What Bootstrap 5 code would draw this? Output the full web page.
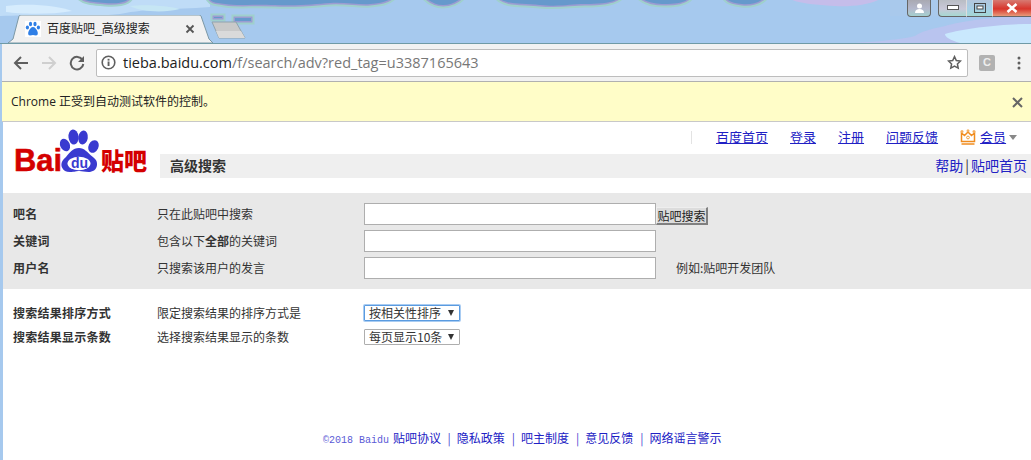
<!DOCTYPE html>
<html lang="zh-CN">
<head>
<meta charset="utf-8">
<title>百度贴吧_高级搜索</title>
<link href="https://cdn.jsdelivr.net/npm/bootstrap@5.3.0/dist/css/bootstrap.min.css" rel="stylesheet">
<style>
html,body{height:460px;overflow:hidden}
body{font-family:"Liberation Sans","Noto Sans CJK SC",sans-serif;font-size:12px;color:#333;background:#a6c9ee;line-height:1.2}
a{color:#2020c4}
.wb-title{height:44px;background:#a6c9ee;border-bottom:1px solid #6f9aa6;padding-left:8px}
.wb-sky{position:absolute;left:0;top:0;width:1031px;height:43px}
.wb-tab{width:205px;height:28px;padding:0 15px 0 17px}
.wb-shape{position:absolute;inset:0;width:100%;height:100%}
.wb-tabtext{font-size:12px;color:#222;margin-left:6px;width:138px;white-space:nowrap}
.wb-newtab{margin:0 0 4px -2px;position:relative}
.wb-ctrls{height:17px;align-self:flex-start;position:relative}
.wb-user{width:24px;height:17px;background:linear-gradient(#a9a9b2,#b4b8cc 55%,#a4d0cf);border:1px solid #666;border-top:0;border-radius:0 0 4px 4px;margin-right:7px}
.wb-min,.wb-max,.wb-close{height:17px;border-bottom:1px solid #666;border-right:1px solid #ddd}
.wb-min{width:29px;background:linear-gradient(#b9bdc4,#c9c8d8 55%,#a6d8d2);border-left:1px solid #666;border-radius:0 0 0 4px}
.wb-max{width:26px;background:linear-gradient(#b3c6dc,#a6cfe6 55%,#a4d8d4)}
.wb-close{width:38px;background:linear-gradient(#d77a72,#d8352c 55%,#e89a78);border-right:0}
.wb-bar{height:38px;background:#f2f2f2;border-bottom:1px solid #b0b0b0;margin-left:2px;padding-left:11px}
.wb-nav{margin-right:12px}
.wb-omni{width:872px;height:28px;background:#fff;border:1px solid #bdbdbd;border-radius:2px;margin-left:-1px;padding:0 5px 0 4px}
.wb-url{font-family:"Open Sans","Liberation Sans",sans-serif;font-size:14.500px;color:#222;margin-left:7px;white-space:nowrap}
.wb-url span{color:#777}
.wb-ext{width:16px;height:16px;background:#b2b2b2;color:#eee;font-weight:700;font-size:11px;border-radius:2px;margin-left:11px}
.wb-dots{margin-left:22px}
.wb-info{height:40px;background:#fffdc8;border-bottom:1px solid #c8c8c8;margin-left:2px;padding:2px 8px 0 9px;color:#222;font-family:"Open Sans","Noto Sans CJK SC",sans-serif;font-size:12px}
.pg{background:#fff;margin-left:3px;height:338px}
.pg-head{padding-bottom:15px}
.pg-logo{width:157px;flex:none;padding:7px 0 0 10px;height:56px}
.pg-logo svg{display:block}
.logo-bai{font-family:"Liberation Sans",sans-serif;font-weight:700;font-size:31px;fill:#d40000;stroke:#d40000;stroke-width:.5px}
.logo-tb{font-family:"Noto Sans CJK SC",sans-serif;font-weight:900;font-size:24px;fill:#d40000}
.logo-du{font-family:"Liberation Sans",sans-serif;font-weight:700;font-size:14px;fill:#3a3ad0}
.pg-top{height:32px;padding:0 0 2px 531px;font-size:13px;font-family:"Noto Sans CJK SC",sans-serif}
.pg-sep{width:1px;height:13px;background:#e3e3e3;margin-right:24px}
.pg-top a{margin-right:22px;white-space:nowrap}
.pg-top a.pg-vip{margin-right:3px;margin-left:4px}
.pg-caret{width:0;height:0;border:4px solid transparent;border-top:5px solid #888;border-bottom:0}
.pg-bar{height:24px;background:#efefef;padding:0 4px 2px 10px;font-family:"Noto Sans CJK SC",sans-serif}
.pg-bar b{font-size:14px;color:#333}
.pg-bar div{font-size:14px;color:#333}
.pg-bar a{text-decoration:none}
.pg-bar span{margin:0 2px}
.fm-gray{background:#e8e8e8;height:96px;padding:10px 0 0 10px}
.fm-plain{padding:16px 0 0 10px}
.fm-row{height:27px;font-family:"Noto Sans CJK SC",sans-serif;font-size:12px}
.fm-row2{height:24px;font-family:"Noto Sans CJK SC",sans-serif;font-size:12px}
.fm-label{width:144px;flex:none;font-weight:700;color:#333;letter-spacing:.25px}
.fm-desc{width:207px;flex:none;color:#333}
.fm-row2 .fm-label,.fm-row2 .fm-desc{padding-top:1px}
.fm-desc b{font-weight:700}
.fm-input{width:292px;height:22px;border:1px solid #aeaeae;background:#fff;flex:none;align-self:flex-start;padding:0 2px;outline:0}
.fm-btn{width:52px;height:18px;padding:0;border:1px solid;border-color:#eee #808080 #808080 #eee;border-width:1px 2px 2px 1px;background:#dcdcdc;font:12px/14px "Noto Sans CJK SC",sans-serif;color:#222;align-self:flex-start;margin-top:4px;white-space:nowrap}
.fm-hint{margin-left:20px;color:#333}
.fm-select{width:96px;height:16px;border:1px solid #aeaeae;background:#fff;padding:0 0 0 4px;font:12px/14px "Noto Sans CJK SC",sans-serif;color:#333;border-radius:1px;overflow:hidden}
.fm-select.on{border:1px solid #5a9be0;box-shadow:0 0 0 1px #a9ccf2}
.fm-tri{margin-left:auto;margin-right:5px;width:0;height:0;border:3.500px solid transparent;border-top:6px solid #333;border-bottom:0}
.pg-foot{margin-top:78px;padding-left:320px;font-family:"Noto Sans CJK SC",sans-serif;font-size:12px;white-space:nowrap}
.pg-foot a{text-decoration:none}
.pg-foot .cp{font-family:"Liberation Mono",monospace;font-size:10px;color:#5a5ad6;margin-right:4px}
.pg-foot i{font-style:normal;color:#4a4ad0;margin:0 6px 0 7px}
.pg-foot i:first-of-type{margin-left:6.500px}
</style>
</head>
<body>
<header>
  <div class="wb-title position-relative d-flex align-items-end">
    <svg class="wb-sky" viewBox="0 0 1031 43" aria-hidden="true">
      <defs>
        <path id="sky1" d="M208 -3H393C388 2 380 3 370 4S345 2 330 3 300 6 275 5 240 6 225 4 212 2 208 -3Z"/>
        <path id="sky2" d="M425 -3H462C458 2 450 5 443 5S430 2 425 -3Z"/>
        <path id="sky3" d="M498 -3H620C615 3 600 4 585 4S560 7 540 5 505 5 498 -3Z"/>
        <path id="sky4" d="M640 -3H690C686 3 675 4 665 4S645 2 640 -3Z"/>
        <path id="sky5" d="M725 -3H765C760 3 750 5 742 4S728 2 725 -3Z"/>
        <path id="sky6" d="M80 -3H130C128 3 115 4 105 3S85 2 80 -3Z"/>
        <path id="sky7" d="M214 17h8v1h-8zM235 18h16v3h-16z"/>
        <g id="skyall"><use href="#sky1"/><use href="#sky2"/><use href="#sky3"/><use href="#sky4"/><use href="#sky5"/><use href="#sky6"/><use href="#sky7"/></g>
      </defs>
      <path d="M0 0H210V7C170 10 150 8 120 14 80 18 30 14 0 16Z" fill="#bfdcf7"/>
      <path d="M6 6C30 3 60 6 72 11 50 15 20 14 6 12Z" fill="#d6ecfd"/>
      <path d="M130 6c15-2 40 0 50 3-15 4-40 3-50-3z" fill="#c6e6f4"/>
      <path d="M790 -1h90c-10 6-30 8-45 7s-35-2-45-7z" fill="#c5bdea"/>
      <path d="M890 0h141v16H890z" fill="#a9c9ec"/>
      <path d="M945 26c20-6 60-10 86-10v28H840c30-2 60-4 75-8 5-4 15-7 30-10z" fill="#c8bff0" opacity=".55"/>
      <path d="M945 34c20-6 60-10 86-10v19H960c-10-3-15-6-15-9z" fill="#c9e8fd"/>
      <use href="#skyall" fill="#9fd0cc" stroke="#9fd0cc" stroke-width="7"/>
      <use href="#skyall" fill="#9c9cd2" stroke="#9c9cd2" stroke-width="3"/>
      <use href="#skyall" fill="#6699cc"/>
    </svg>
    <div class="wb-tab position-relative d-flex align-items-center">
      <svg class="wb-shape" viewBox="0 0 205 28" aria-hidden="true"><path d="M0 28 L5 24 L11 1 Q11.500 0 13 0 L191 0 Q192.500 0 193 1 L201 24 L205 28Z" fill="#f1f1f1" stroke="#7c98a6"/></svg>
      <svg class="position-relative" width="16" height="16" viewBox="0 0 16 16" aria-hidden="true"><rect width="16" height="16" fill="#fff"/><g fill="#2f7fe6"><ellipse cx="5.500" cy="3" rx="1.600" ry="2.200"/><ellipse cx="10" cy="3" rx="1.600" ry="2.200"/><ellipse cx="2.400" cy="6.500" rx="1.600" ry="2"/><ellipse cx="13.400" cy="6.500" rx="1.600" ry="2"/><path d="M8 6c-2 0-3 2-4 3.500S2.500 14.500 5 14.500c1.200 0 2-.4 3-.4s1.800.4 3 .4c2.500 0 2-3.500 1-5S10 6 8 6z"/></g></svg>
      <span class="wb-tabtext position-relative">百度贴吧_高级搜索</span>
      <svg class="position-relative" width="10" height="10" viewBox="0 0 10 10" aria-hidden="true"><path d="M1.500 1.500l7 7M8.500 1.500l-7 7" stroke="#555" stroke-width="1.800"/></svg>
    </div>
    <svg class="wb-newtab" width="35" height="18" viewBox="0 0 35 18" aria-hidden="true"><path d="M1 1H25L34 17H8Z" fill="#c9c9c9" stroke="#8fa3ad"/><path d="M5 10H30L34 17H8Z" fill="#dadada"/></svg>
    <div class="wb-ctrls ms-auto d-flex">
      <div class="wb-user d-flex align-items-center justify-content-center"><svg width="11" height="11" viewBox="0 0 11 11" aria-hidden="true"><circle cx="5.500" cy="3" r="2.500" fill="#fff"/><path d="M1 10c0-3 2-4 4.500-4S10 7 10 10z" fill="#fff"/></svg></div>
      <div class="wb-min d-flex align-items-center justify-content-center"><svg width="12" height="6" viewBox="0 0 12 6" aria-hidden="true"><rect x=".5" y=".5" width="11" height="4" fill="#fff" stroke="#555"/></svg></div>
      <div class="wb-max d-flex align-items-center justify-content-center"><svg width="12" height="10" viewBox="0 0 12 10" aria-hidden="true"><rect x=".5" y=".5" width="11" height="9" fill="none" stroke="#444"/><rect x="3" y="3" width="6" height="3" fill="#fff" stroke="#444"/></svg></div>
      <div class="wb-close d-flex align-items-center justify-content-center"><svg width="12" height="10" viewBox="0 0 12 10" aria-hidden="true"><path d="M1.500 1l9 8M10.500 1l-9 8" stroke="#fff" stroke-width="2.600"/></svg></div>
    </div>
  </div>
  <div class="wb-bar d-flex align-items-center">
    <svg class="wb-nav" width="16" height="16" viewBox="0 0 16 16" aria-hidden="true"><path d="M15 8H2M8 2L2 8l6 6" fill="none" stroke="#5f5f5f" stroke-width="2"/></svg>
    <svg class="wb-nav" width="16" height="16" viewBox="0 0 16 16" aria-hidden="true"><path d="M1 8h13M8 2l6 6-6 6" fill="none" stroke="#cfcfcf" stroke-width="2"/></svg>
    <svg class="wb-nav" width="16" height="16" viewBox="0 0 16 16" aria-hidden="true"><path d="M13.500 5A6.300 6.300 0 1 0 14.300 9" fill="none" stroke="#5f5f5f" stroke-width="2"/><path d="M15 1v6H9z" fill="#5f5f5f"/></svg>
    <div class="wb-omni d-flex align-items-center">
      <svg width="15" height="15" viewBox="0 0 15 15" aria-hidden="true"><circle cx="7.500" cy="7.500" r="6.300" fill="none" stroke="#5f5f5f" stroke-width="1.600"/><rect x="6.600" y="6.500" width="1.900" height="4.500" fill="#5f5f5f"/><rect x="6.600" y="3.800" width="1.900" height="1.800" fill="#5f5f5f"/></svg>
      <div class="wb-url">tieba.baidu.com<span>/f/search/adv?red_tag=u3387165643</span></div>
      <svg class="ms-auto" width="15" height="15" viewBox="0 0 15 15" aria-hidden="true"><path d="M7.500 1.600l1.800 3.900 4.200.5-3.100 2.900.8 4.200-3.700-2.100-3.700 2.100.8-4.200L1.500 6l4.200-.5z" fill="none" stroke="#5f5f5f" stroke-width="1.500"/></svg>
    </div>
    <div class="wb-ext d-flex align-items-center justify-content-center">C</div>
    <svg class="wb-dots" width="4" height="14" viewBox="0 0 4 14" aria-hidden="true"><g fill="#5f5f5f"><circle cx="2" cy="2" r="1.500"/><circle cx="2" cy="7" r="1.500"/><circle cx="2" cy="12" r="1.500"/></g></svg>
  </div>
  <div class="wb-info d-flex align-items-center justify-content-between">
    <span>Chrome 正受到自动测试软件的控制。</span>
    <svg width="11" height="11" viewBox="0 0 11 11" aria-hidden="true"><path d="M1 1l9 9M10 1l-9 9" stroke="#666" stroke-width="2"/></svg>
  </div>
</header>
<main class="pg">
  <div class="pg-head d-flex">
    <div class="pg-logo">
      <svg width="138" height="48" viewBox="0 0 138 48" role="img" aria-label="Baidu 贴吧">
        <text class="logo-bai" x="1" y="42" textLength="48" lengthAdjust="spacingAndGlyphs">Bai</text>
        <g fill="#3a3ad0">
          <ellipse cx="60.500" cy="8" rx="5" ry="7.500" transform="rotate(-6 60.500 8)"/><ellipse cx="52" cy="16" rx="4.800" ry="6.500" transform="rotate(-25 52 16)"/>
          <ellipse cx="70" cy="8.500" rx="4.800" ry="7" transform="rotate(8 70 8.500)"/><ellipse cx="80.500" cy="17.500" rx="5" ry="6.500" transform="rotate(25 80.500 17.500)"/>
          <path d="M66 19c-6 0-10 5-13 9-4 3-5.500 7-4 10.500s5 5 9.500 4.500 5.500-1 8-1 5 1 9 1 8-2 8.500-7-2.500-6.500-6-9.500-6.500-7.500-12-7.500z"/>
        </g>
        <ellipse cx="66" cy="34.500" rx="11.500" ry="6.800" fill="#fff"/>
        <text class="logo-du" x="58" y="39">du</text>
        <text class="logo-tb" x="88" y="41" textLength="46" lengthAdjust="spacingAndGlyphs">贴吧</text>
      </svg>
    </div>
    <div class="flex-grow-1">
      <nav class="pg-top d-flex align-items-center">
        <span class="pg-sep"></span>
        <a href="#">百度首页</a><a href="#">登录</a><a href="#">注册</a><a href="#">问题反馈</a>
        <svg width="16" height="16" viewBox="0 0 16 16" aria-hidden="true"><path d="M1.500 4v8.500h13V4L11.500 6.500 8 3 4.500 6.500z" fill="#fff" stroke="#f08c1e" stroke-width="1.500"/><path d="M1.500 15h13" stroke="#f08c1e" stroke-width="1.500"/><g fill="#f5b060"><circle cx="2" cy="2.500" r="1.500"/><circle cx="8" cy="1.800" r="1.500"/><circle cx="14" cy="2.500" r="1.500"/></g><circle cx="8" cy="8.500" r="1.400" fill="none" stroke="#f0a040"/></svg>
        <a class="pg-vip" href="#">会员</a><span class="pg-caret"></span>
      </nav>
      <div class="pg-bar d-flex align-items-center justify-content-between">
        <b>高级搜索</b>
        <div><a href="#">帮助</a><span>|</span><a href="#">贴吧首页</a></div>
      </div>
    </div>
  </div>
  <form onsubmit="return false">
    <div class="fm-gray">
      <div class="fm-row d-flex">
        <div class="fm-label pt-1">吧名</div><div class="fm-desc pt-1">只在此贴吧中搜索</div>
        <input class="fm-input" type="text" aria-label="吧名"><button class="fm-btn" type="button">贴吧搜索</button>
      </div>
      <div class="fm-row d-flex">
        <div class="fm-label pt-1">关键词</div><div class="fm-desc pt-1">包含以下<b>全部</b>的关键词</div>
        <input class="fm-input" type="text" aria-label="关键词">
      </div>
      <div class="fm-row d-flex">
        <div class="fm-label pt-1">用户名</div><div class="fm-desc pt-1">只搜索该用户的发言</div>
        <input class="fm-input" type="text" aria-label="用户名"><span class="fm-hint pt-1">例如:贴吧开发团队</span>
      </div>
    </div>
    <div class="fm-plain">
      <div class="fm-row2 d-flex">
        <div class="fm-label">搜索结果排序方式</div><div class="fm-desc">限定搜索结果的排序方式是</div>
        <div class="fm-select on d-flex align-items-center"><span>按相关性排序</span><span class="fm-tri"></span></div>
      </div>
      <div class="fm-row2 d-flex">
        <div class="fm-label">搜索结果显示条数</div><div class="fm-desc">选择搜索结果显示的条数</div>
        <div class="fm-select d-flex align-items-center"><span>每页显示10条</span><span class="fm-tri"></span></div>
      </div>
    </div>
  </form>
  <footer class="pg-foot"><span class="cp">©2018 Baidu</span><a href="#">贴吧协议</a><i>|</i><a href="#">隐私政策</a><i>|</i><a href="#">吧主制度</a><i>|</i><a href="#">意见反馈</a><i>|</i><a href="#">网络谣言警示</a></footer>
</main>
<script src="https://cdn.jsdelivr.net/npm/bootstrap@5.3.0/dist/js/bootstrap.bundle.min.js"></script>
</body>
</html>
